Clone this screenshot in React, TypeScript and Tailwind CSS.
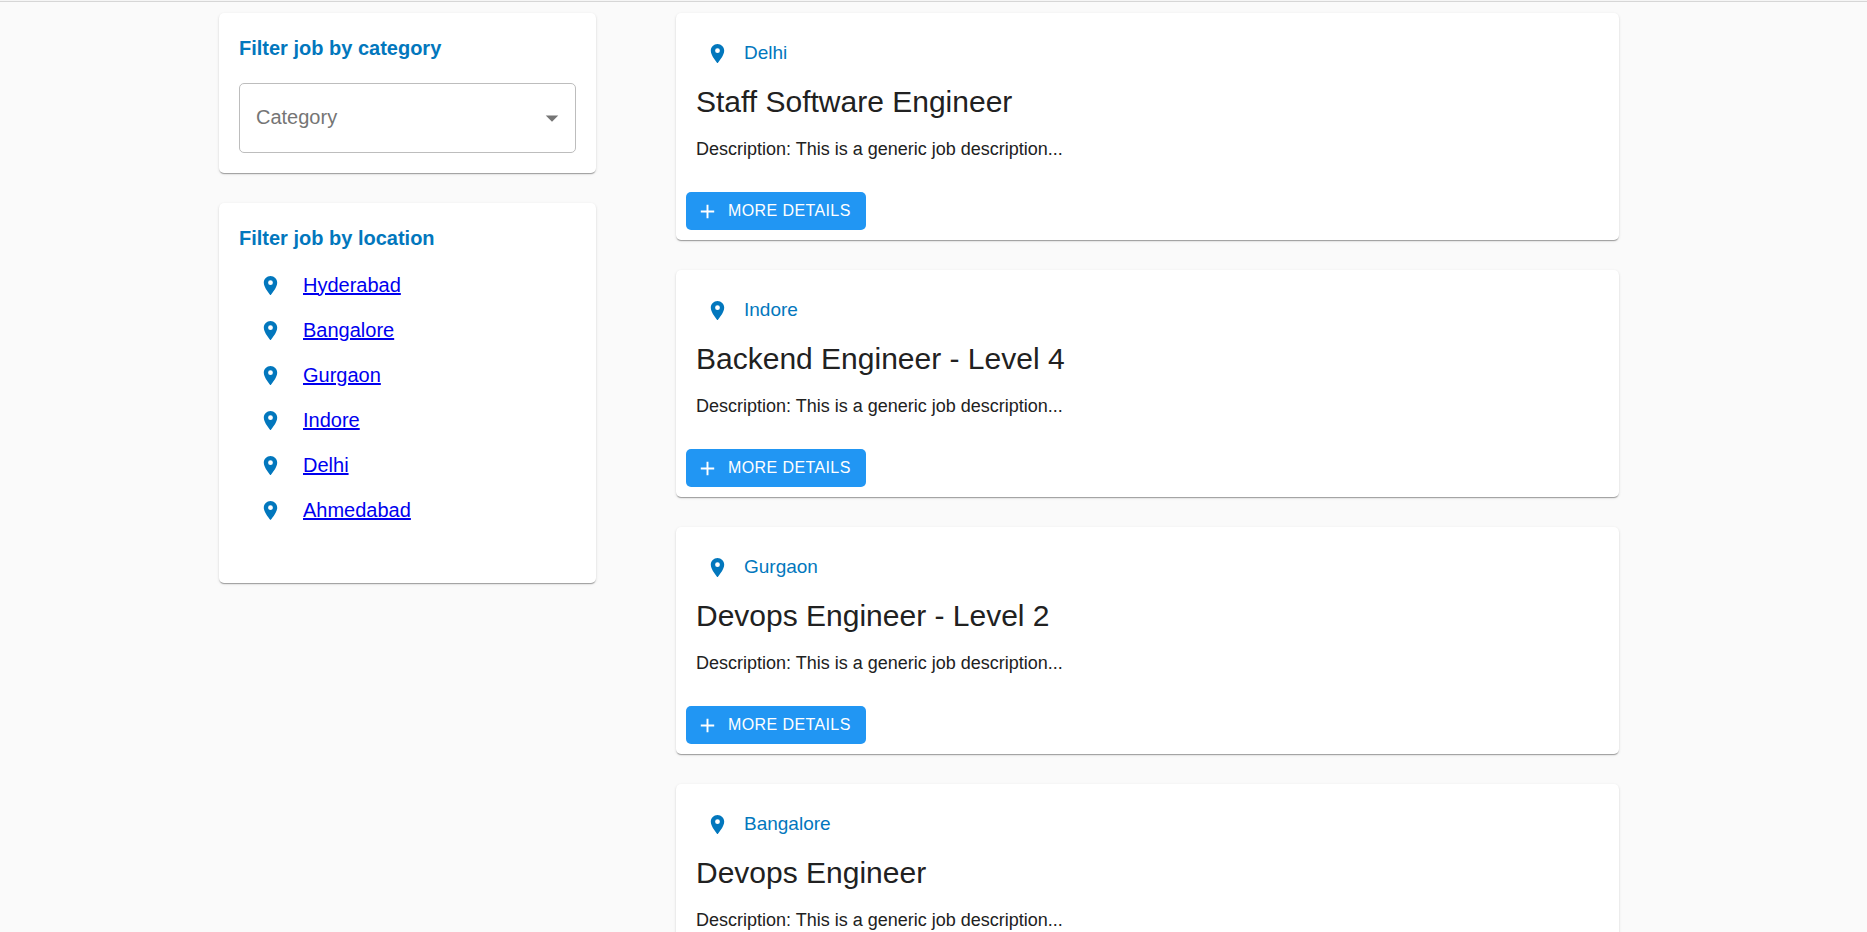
import { useState } from "react";
import { MdAdd, MdArrowDropDown, MdLocationOn } from "react-icons/md";

const locations = ["Hyderabad", "Bangalore", "Gurgaon", "Indore", "Delhi", "Ahmedabad"];

const jobs = [
  { location: "Delhi", title: "Staff Software Engineer" },
  { location: "Indore", title: "Backend Engineer - Level 4" },
  { location: "Gurgaon", title: "Devops Engineer - Level 2" },
  { location: "Bangalore", title: "Devops Engineer" },
];

const cardClass =
  "rounded-[5px] bg-white shadow-[0_2px_1px_-1px_rgba(0,0,0,0.2),0_1px_1px_0_rgba(0,0,0,0.14),0_1px_3px_0_rgba(0,0,0,0.12)]";

function CategoryFilter() {
  const [category, setCategory] = useState("");
  return (
    <section className={`${cardClass} p-5`}>
      <h2 className="text-xl leading-[30px] font-bold text-[#0277bd]">
        <label htmlFor="category">Filter job by category</label>
      </h2>
      <div className="relative mt-5">
        <select
          id="category"
          value={category}
          onChange={(event) => setCategory(event.target.value)}
          className="h-[70px] w-full appearance-none rounded-[5px] border border-[#bdbdbd] bg-white px-4 pb-0.5 text-xl text-[#757575]"
        >
          <option value="">Category</option>
        </select>
        <MdArrowDropDown className="pointer-events-none absolute top-5 right-[9px] size-[30px] text-[#757575]" />
      </div>
    </section>
  );
}

function LocationFilter() {
  return (
    <section className={`${cardClass} px-5 pt-5 pb-[50px]`}>
      <h2 className="text-xl leading-[30px] font-bold text-[#0277bd]">Filter job by location</h2>
      <ul className="mt-2.5">
        {locations.map((name) => (
          <li key={name} className="flex h-[45px] items-center gap-[21px] pl-5">
            <MdLocationOn className="size-[23px] text-[#0277bd]" />
            <a href={`#${name}`} className="pb-0.5 text-xl text-[#0000ee] underline">
              {name}
            </a>
          </li>
        ))}
      </ul>
    </section>
  );
}

function JobCard({ location, title }: { location: string; title: string }) {
  return (
    <article className={cardClass}>
      <div className="px-5 pt-5">
        <div className="flex h-[41px] items-center gap-[15px] pl-2.5 text-[#0277bd]">
          <MdLocationOn className="size-[23px]" />
          <p className="text-[19px]">{location}</p>
        </div>
        <h2 className="mt-2 text-3xl leading-10 text-[#212121]">{title}</h2>
        <p className="mt-3 text-lg leading-[30px] text-[#212121]">Description: This is a generic job description...</p>
      </div>
      <div className="px-2.5 pt-7 pb-2.5">
        <button type="button" className="flex h-[38px] items-center gap-[9px] rounded-[5px] bg-[#2196f3] pr-[15px] pl-2.5 text-base tracking-wide text-white">
          <MdAdd className="size-[23px]" />
          MORE DETAILS
        </button>
      </div>
    </article>
  );
}

export default function App() {
  return (
    <div className="min-h-screen bg-[#fafafa] font-['Liberation_Sans',Arial,sans-serif]">
      <header className="h-0.5 border-b border-[#d6d6d6] bg-[#f5f5f5]" />
      <main className="grid grid-cols-[219fr_377fr_80fr_943fr_248fr] items-start pt-[11px] pb-[30px]">
        <aside className="col-start-2 flex flex-col gap-[30px]">
          <CategoryFilter />
          <LocationFilter />
        </aside>
        <div className="col-start-4 flex flex-col gap-[30px]">
          {jobs.map((job) => (
            <JobCard key={job.title} {...job} />
          ))}
        </div>
      </main>
    </div>
  );
}
